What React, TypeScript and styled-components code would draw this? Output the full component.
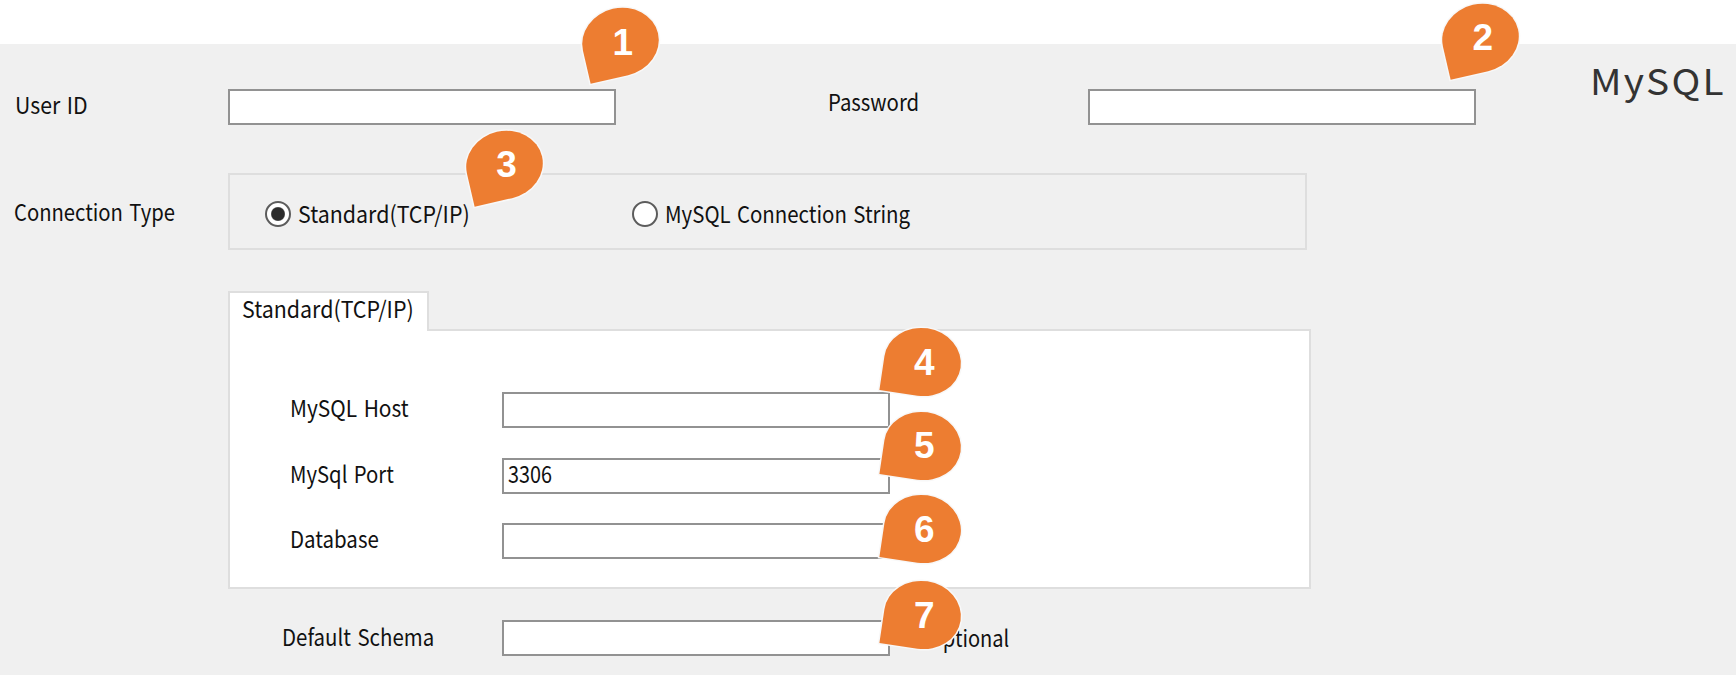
import React, { useLayoutEffect, useRef, useState } from "react";
import styled, { createGlobalStyle } from "styled-components";

const GlobalStyle = createGlobalStyle`
  * { box-sizing: border-box; }
  body { margin: 0; background: #fff; }
`;

const uiFont = '"Noto Sans CJK JP", "Noto Sans", sans-serif';

const Page = styled.main`
  position: relative;
  width: 1736px;
  height: 675px;
  padding-top: 44px;
  overflow: hidden;
  background: #fff;
  color: #111;
  font-family: ${uiFont};
`;

const Form = styled.form`
  display: flex;
  flex-direction: column;
  height: 631px;
  padding-top: 45px;
  background: #f0f0f0;
`;

const Row = styled.div<{ $height: number; $gap: number }>`
  display: flex;
  align-items: flex-start;
  flex: none;
  height: ${(p) => p.$height}px;
  margin-bottom: ${(p) => p.$gap}px;
`;

const LabelCell = styled.div<{ $width: number; $indent: number; $drop: number }>`
  flex: none;
  width: ${(p) => p.$width}px;
  padding: ${(p) => p.$drop}px 0 0 ${(p) => p.$indent}px;
`;

const TextLine = styled.span<{ $width: number; $size: number }>`
  display: block;
  width: ${(p) => p.$width}px;
  height: 24px;
  font-size: ${(p) => p.$size}px;
  line-height: 24px;
  white-space: nowrap;
`;

const Glyphs = styled.span`
  display: inline-block;
  word-spacing: 2px;
  transform-origin: 0 50%;
`;

/* Condenses the face horizontally so that the text fills its set width. */
function Fit({ width, size = 23, children }: { width: number; size?: number; children: string }) {
  const ref = useRef<HTMLSpanElement>(null);
  const [scale, setScale] = useState(1);
  useLayoutEffect(() => {
    if (ref.current) setScale(width / ref.current.offsetWidth);
  }, [width, size, children]);
  return (
    <TextLine $width={width} $size={size}>
      <Glyphs ref={ref} style={{ transform: `scaleX(${scale})` }}>{children}</Glyphs>
    </TextLine>
  );
}

const Field = styled.div`
  flex: none;
  width: 388px;
  height: 36px;
  padding: 1px 0 0 4px;
  border: 2px solid #929292;
  background: #fff;
`;

const Brand = styled.div`
  margin: -22px 0 0 114px;
  color: #333;
  letter-spacing: 2px;
`;

const RadioGroup = styled.div`
  display: flex;
  width: 1079px;
  height: 77px;
  padding: 26px 0 0 35px;
  border: 2px solid #dedede;
`;

const RadioOption = styled.div<{ $width: number }>`
  display: flex;
  align-items: flex-start;
  gap: 7px;
  width: ${(p) => p.$width}px;
`;

const RadioMark = styled.span<{ $checked?: boolean }>`
  width: 26px;
  height: 26px;
  border: 2px solid #5c5c5c;
  border-radius: 50%;
  background: ${(p) =>
    p.$checked ? "radial-gradient(circle, #2b2b2b 6.3px, #fff 7.5px)" : "#fff"};
`;

const Tabs = styled.section`
  flex: none;
  width: 1083px;
  height: 298px;
  margin: 0 0 31px 228px;
`;

const Tab = styled.div`
  position: relative;
  z-index: 1;
  width: 201px;
  height: 40px;
  padding: 3px 0 0 12px;
  border: 2px solid #dedede;
  border-bottom: 0;
  background: #fff;
`;

const TabPanel = styled.div`
  height: 260px;
  margin-top: -2px;
  padding-top: 61px;
  border: 2px solid #dedede;
  background: #fff;
`;

const Pin = styled.div<{ $x: number; $y: number; $tilt: number }>`
  position: absolute;
  z-index: 2;
  left: ${(p) => p.$x - 38.5}px;
  top: ${(p) => p.$y - 34}px;
  width: 77px;
  height: 68px;
  display: flex;
  align-items: center;
  justify-content: center;
  padding: 1px 0 0 4px;
  color: #fff;
  font: bold 37px/68px "Liberation Sans", Arial, sans-serif;
  &::before {
    content: "";
    position: absolute;
    inset: 0;
    z-index: -1;
    border-radius: 50% 50% 50% 0;
    background: #ed7d31;
    box-shadow: 0 0 0 1.5px #f8f8f8;
    transform: rotate(${(p) => p.$tilt}deg);
  }
`;

const pins = [
  { x: 620.7, y: 42.3, tilt: -13 },
  { x: 1480.7, y: 37.8, tilt: -13 },
  { x: 504.5, y: 164.7, tilt: -13 },
  { x: 922.4, y: 362, tilt: 8.5 },
  { x: 922.4, y: 445.7, tilt: 8.5 },
  { x: 922.4, y: 529.4, tilt: 8.5 },
  { x: 922.4, y: 615.3, tilt: 8.5 },
];

export default function App() {
  return (
    <Page>
      <GlobalStyle />
      <Form>
        <Row $height={36} $gap={48}>
          <LabelCell $width={228} $indent={15} $drop={3}><Fit width={73}>User ID</Fit></LabelCell>
          <Field />
          <LabelCell $width={472} $indent={212} $drop={0}><Fit width={91}>Password</Fit></LabelCell>
          <Field />
          <Brand><Fit width={136} size={36}>MySQL</Fit></Brand>
        </Row>
        <Row $height={77} $gap={41}>
          <LabelCell $width={228} $indent={14} $drop={26}><Fit width={161}>Connection Type</Fit></LabelCell>
          <RadioGroup>
            <RadioOption $width={367}>
              <RadioMark $checked />
              <Fit width={172}>Standard(TCP/IP)</Fit>
            </RadioOption>
            <RadioOption $width={300}>
              <RadioMark />
              <Fit width={245}>MySQL Connection String</Fit>
            </RadioOption>
          </RadioGroup>
        </Row>
        <Tabs>
          <Tab><Fit width={172}>Standard(TCP/IP)</Fit></Tab>
          <TabPanel>
            <Row $height={36} $gap={30}>
              <LabelCell $width={272} $indent={60} $drop={3}><Fit width={119}>MySQL Host</Fit></LabelCell>
              <Field />
            </Row>
            <Row $height={36} $gap={29}>
              <LabelCell $width={272} $indent={60} $drop={3}><Fit width={104}>MySql Port</Fit></LabelCell>
              <Field><Fit width={44}>3306</Fit></Field>
            </Row>
            <Row $height={36} $gap={0}>
              <LabelCell $width={272} $indent={60} $drop={3}><Fit width={89}>Database</Fit></LabelCell>
              <Field />
            </Row>
          </TabPanel>
        </Tabs>
        <Row $height={36} $gap={0}>
          <LabelCell $width={502} $indent={282} $drop={4}><Fit width={152}>Default Schema</Fit></LabelCell>
          <Field />
          <LabelCell $width={130} $indent={38} $drop={5}><Fit width={81}>Optional</Fit></LabelCell>
        </Row>
      </Form>
      {pins.map((pin, i) => (
        <Pin key={i} $x={pin.x} $y={pin.y} $tilt={pin.tilt}>{i + 1}</Pin>
      ))}
    </Page>
  );
}
